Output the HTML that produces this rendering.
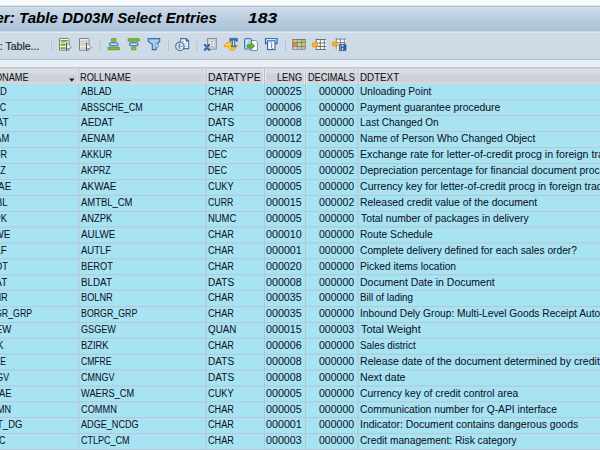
<!DOCTYPE html><html><head><meta charset="utf-8"><style>
*{margin:0;padding:0;box-sizing:border-box}
html,body{width:600px;height:450px;overflow:hidden;background:#f6f8fa}
body{position:relative;font-family:"Liberation Sans",sans-serif}
.a{position:absolute}
.t{position:absolute;white-space:nowrap;font-size:10px;line-height:12px;color:#10131c;transform-origin:0 0;-webkit-text-stroke:0.05px #10131c}
</style></head><body><div class="a" style="left:0;top:0px;width:600px;height:5px;background:#f9fafc"></div>
<div class="a" style="left:0;top:5px;width:600px;height:1px;background:#dfe5ec"></div>
<div class="a" style="left:0;top:6px;width:600px;height:1px;background:#b3c0cd"></div>
<div class="a" style="left:0;top:7px;width:600px;height:1px;background:#d3e0ec"></div>
<div class="a" style="left:0;top:8px;width:600px;height:23px;background:linear-gradient(#cbdae8,#a9c0d6)"></div>
<div class="a" style="left:0;top:31px;width:600px;height:1px;background:#c6d6e3"></div>
<div class="a" style="left:0;top:32px;width:600px;height:1px;background:#dfe8f0"></div>
<div class="a" style="left:0;top:33px;width:600px;height:26px;background:#cedae5"></div>
<div class="a" style="left:0;top:58px;width:600px;height:1px;background:#c8d4df"></div>
<div class="a" style="left:0;top:59px;width:600px;height:1px;background:#b5c3d1"></div>
<div class="a" style="left:0;top:60px;width:600px;height:7px;background:#e7eef6"></div>
<div class="a" style="left:0;top:67px;width:600px;height:1px;background:#bec8d2"></div>
<div class="a" style="left:0;top:68px;width:600px;height:1px;background:#ccd2d8"></div>
<div class="a" style="left:0;top:69px;width:600px;height:15px;background:linear-gradient(#d9dce0 0%,#d8dbdf 25%,#cdd1d8 45%,#cdd1d8 80%,#d7dade 100%)"></div>
<div class="t" style="left:-13.5px;top:9px;font-size:14px;line-height:18px;font-weight:bold;font-style:italic;color:#000;transform-origin:0 0;transform:scaleX(1.08)">ser:</div>
<div class="t" style="left:19px;top:9px;font-size:14px;line-height:18px;font-weight:bold;font-style:italic;color:#000;transform-origin:0 0;transform:scaleX(1.076)">Table DD03M Select Entries</div>
<div class="t" style="left:247.5px;top:9px;font-size:14px;line-height:18px;font-weight:bold;font-style:italic;color:#000;transform-origin:0 0;transform:scaleX(1.245)">183</div>
<div class="t" style="left:-0.2px;top:38.6px;font-size:10.5px;line-height:14px;color:#22262e;-webkit-text-stroke:0.2px #22262e">: Table...</div>
<div class="a" style="left:0;top:84px;width:600px;height:366px;background:#a7e3f3"></div>
<div class="a" style="left:0px;top:99px;width:600px;height:1px;background:#b6c6d2;opacity:0.80"></div>
<div class="a" style="left:0px;top:100px;width:600px;height:1px;background:#b6c6d2;opacity:0.20"></div>
<div class="a" style="left:0px;top:115px;width:600px;height:1px;background:#b6c6d2;opacity:0.90"></div>
<div class="a" style="left:0px;top:116px;width:600px;height:1px;background:#b6c6d2;opacity:0.10"></div>
<div class="a" style="left:0px;top:131px;width:600px;height:1px;background:#b6c6d2;opacity:0.90"></div>
<div class="a" style="left:0px;top:132px;width:600px;height:1px;background:#b6c6d2;opacity:0.10"></div>
<div class="a" style="left:0px;top:147px;width:600px;height:1px;background:#b6c6d2;opacity:0.90"></div>
<div class="a" style="left:0px;top:148px;width:600px;height:1px;background:#b6c6d2;opacity:0.10"></div>
<div class="a" style="left:0px;top:163px;width:600px;height:1px;background:#b6c6d2;opacity:0.90"></div>
<div class="a" style="left:0px;top:164px;width:600px;height:1px;background:#b6c6d2;opacity:0.10"></div>
<div class="a" style="left:0px;top:179px;width:600px;height:1px;background:#b6c6d2;opacity:0.90"></div>
<div class="a" style="left:0px;top:180px;width:600px;height:1px;background:#b6c6d2;opacity:0.10"></div>
<div class="a" style="left:0px;top:194px;width:600px;height:1px;background:#b6c6d2;opacity:0.10"></div>
<div class="a" style="left:0px;top:195px;width:600px;height:1px;background:#b6c6d2;opacity:0.90"></div>
<div class="a" style="left:0px;top:210px;width:600px;height:1px;background:#b6c6d2;opacity:0.10"></div>
<div class="a" style="left:0px;top:211px;width:600px;height:1px;background:#b6c6d2;opacity:0.90"></div>
<div class="a" style="left:0px;top:226px;width:600px;height:1px;background:#b6c6d2;opacity:0.50"></div>
<div class="a" style="left:0px;top:227px;width:600px;height:1px;background:#b6c6d2;opacity:0.50"></div>
<div class="a" style="left:0px;top:242px;width:600px;height:1px;background:#b6c6d2;opacity:0.50"></div>
<div class="a" style="left:0px;top:243px;width:600px;height:1px;background:#b6c6d2;opacity:0.50"></div>
<div class="a" style="left:0px;top:258px;width:600px;height:1px;background:#b6c6d2;opacity:0.70"></div>
<div class="a" style="left:0px;top:259px;width:600px;height:1px;background:#b6c6d2;opacity:0.30"></div>
<div class="a" style="left:0px;top:274px;width:600px;height:1px;background:#b6c6d2;opacity:0.80"></div>
<div class="a" style="left:0px;top:275px;width:600px;height:1px;background:#b6c6d2;opacity:0.20"></div>
<div class="a" style="left:0px;top:289px;width:600px;height:1px;background:#b6c6d2;opacity:0.20"></div>
<div class="a" style="left:0px;top:290px;width:600px;height:1px;background:#b6c6d2;opacity:0.80"></div>
<div class="a" style="left:0px;top:306px;width:600px;height:1px;background:#b6c6d2;opacity:1.00"></div>
<div class="a" style="left:0px;top:322px;width:600px;height:1px;background:#b6c6d2;opacity:1.00"></div>
<div class="a" style="left:0px;top:337px;width:600px;height:1px;background:#b6c6d2;opacity:0.20"></div>
<div class="a" style="left:0px;top:338px;width:600px;height:1px;background:#b6c6d2;opacity:0.80"></div>
<div class="a" style="left:0px;top:353px;width:600px;height:1px;background:#b6c6d2;opacity:0.20"></div>
<div class="a" style="left:0px;top:354px;width:600px;height:1px;background:#b6c6d2;opacity:0.80"></div>
<div class="a" style="left:0px;top:369px;width:600px;height:1px;background:#b6c6d2;opacity:0.50"></div>
<div class="a" style="left:0px;top:370px;width:600px;height:1px;background:#b6c6d2;opacity:0.50"></div>
<div class="a" style="left:0px;top:385px;width:600px;height:1px;background:#b6c6d2;opacity:0.50"></div>
<div class="a" style="left:0px;top:386px;width:600px;height:1px;background:#b6c6d2;opacity:0.50"></div>
<div class="a" style="left:0px;top:401px;width:600px;height:1px;background:#b6c6d2;opacity:0.70"></div>
<div class="a" style="left:0px;top:402px;width:600px;height:1px;background:#b6c6d2;opacity:0.30"></div>
<div class="a" style="left:0px;top:417px;width:600px;height:1px;background:#b6c6d2;opacity:1.00"></div>
<div class="a" style="left:0px;top:433px;width:600px;height:1px;background:#b6c6d2;opacity:1.00"></div>
<div class="a" style="left:0px;top:449px;width:600px;height:1px;background:#b6c6d2;opacity:1.00"></div>
<div class="a" style="left:77px;top:69px;width:1px;height:15px;background:#e6e9ed;opacity:0.70"></div>
<div class="a" style="left:78px;top:69px;width:1px;height:15px;background:#e6e9ed;opacity:0.30"></div>
<div class="a" style="left:79px;top:69px;width:1px;height:15px;background:#e6e9ed;opacity:0.70"></div>
<div class="a" style="left:80px;top:69px;width:1px;height:15px;background:#e6e9ed;opacity:0.30"></div>
<div class="a" style="left:78px;top:69px;width:1px;height:15px;background:#b9c0c8;opacity:0.70"></div>
<div class="a" style="left:79px;top:69px;width:1px;height:15px;background:#b9c0c8;opacity:0.30"></div>
<div class="a" style="left:78px;top:84px;width:1px;height:366px;background:#b6c6d2;opacity:0.70"></div>
<div class="a" style="left:79px;top:84px;width:1px;height:366px;background:#b6c6d2;opacity:0.30"></div>
<div class="a" style="left:204px;top:69px;width:1px;height:15px;background:#e6e9ed;opacity:0.50"></div>
<div class="a" style="left:205px;top:69px;width:1px;height:15px;background:#e6e9ed;opacity:0.50"></div>
<div class="a" style="left:206px;top:69px;width:1px;height:15px;background:#e6e9ed;opacity:0.50"></div>
<div class="a" style="left:207px;top:69px;width:1px;height:15px;background:#e6e9ed;opacity:0.50"></div>
<div class="a" style="left:205px;top:69px;width:1px;height:15px;background:#b9c0c8;opacity:0.50"></div>
<div class="a" style="left:206px;top:69px;width:1px;height:15px;background:#b9c0c8;opacity:0.50"></div>
<div class="a" style="left:205px;top:84px;width:1px;height:366px;background:#b6c6d2;opacity:0.50"></div>
<div class="a" style="left:206px;top:84px;width:1px;height:366px;background:#b6c6d2;opacity:0.50"></div>
<div class="a" style="left:263px;top:69px;width:1px;height:15px;background:#e6e9ed;opacity:1.00"></div>
<div class="a" style="left:265px;top:69px;width:1px;height:15px;background:#e6e9ed;opacity:1.00"></div>
<div class="a" style="left:264px;top:69px;width:1px;height:15px;background:#b9c0c8;opacity:1.00"></div>
<div class="a" style="left:264px;top:84px;width:1px;height:366px;background:#b6c6d2;opacity:1.00"></div>
<div class="a" style="left:304px;top:69px;width:1px;height:15px;background:#e6e9ed;opacity:1.00"></div>
<div class="a" style="left:306px;top:69px;width:1px;height:15px;background:#e6e9ed;opacity:1.00"></div>
<div class="a" style="left:305px;top:69px;width:1px;height:15px;background:#b9c0c8;opacity:1.00"></div>
<div class="a" style="left:305px;top:84px;width:1px;height:366px;background:#b6c6d2;opacity:1.00"></div>
<div class="a" style="left:356px;top:69px;width:1px;height:15px;background:#e6e9ed;opacity:0.50"></div>
<div class="a" style="left:357px;top:69px;width:1px;height:15px;background:#e6e9ed;opacity:0.50"></div>
<div class="a" style="left:358px;top:69px;width:1px;height:15px;background:#e6e9ed;opacity:0.50"></div>
<div class="a" style="left:359px;top:69px;width:1px;height:15px;background:#e6e9ed;opacity:0.50"></div>
<div class="a" style="left:357px;top:69px;width:1px;height:15px;background:#b9c0c8;opacity:0.50"></div>
<div class="a" style="left:358px;top:69px;width:1px;height:15px;background:#b9c0c8;opacity:0.50"></div>
<div class="a" style="left:357px;top:84px;width:1px;height:366px;background:#b6c6d2;opacity:0.50"></div>
<div class="a" style="left:358px;top:84px;width:1px;height:366px;background:#b6c6d2;opacity:0.50"></div>
<div class="t" style="left:-23.82px;top:71.60px;transform:scaleX(0.9200)">FIELDNAME</div>
<div class="t" style="left:80.47px;top:71.60px;transform:scaleX(0.9242);">ROLLNAME</div>
<div class="t" style="left:207.72px;top:71.60px;transform:scaleX(1.0430);">DATATYPE</div>
<div class="t" style="left:277.44px;top:71.60px;transform:scaleX(0.9205);">LENG</div>
<div class="t" style="left:307.84px;top:71.60px;transform:scaleX(0.9149);">DECIMALS</div>
<div class="t" style="left:359.88px;top:71.60px;transform:scaleX(0.9780);">DDTEXT</div>
<svg class="a" style="left:68px;top:77px" width="8" height="7" viewBox="0 0 8 7"><path d="M1.2 1.4 H6.4 L3.8 4.8 Z" fill="#15171c"/></svg>
<div class="t" style="left:-23.84px;top:85.50px;transform:scaleX(0.9425);">ABLAD</div>
<div class="t" style="left:81.26px;top:85.50px;transform:scaleX(0.9331);">ABLAD</div>
<div class="t" style="left:207.62px;top:85.50px;transform:scaleX(0.9144);">CHAR</div>
<div class="t" style="left:266.38px;top:85.50px;transform:scaleX(1.0702);">000025</div>
<div class="t" style="left:319.09px;top:85.50px;transform:scaleX(1.0544);">000000</div>
<div class="t" style="left:359.97px;top:85.50px;transform:scaleX(1.0103);">Unloading Point</div>
<div class="t" style="left:-23.83px;top:101.50px;transform:scaleX(0.8917);">ABSSC</div>
<div class="t" style="left:81.27px;top:101.50px;transform:scaleX(0.8955);">ABSSCHE_CM</div>
<div class="t" style="left:207.62px;top:101.50px;transform:scaleX(0.9144);">CHAR</div>
<div class="t" style="left:266.38px;top:101.50px;transform:scaleX(1.0702);">000006</div>
<div class="t" style="left:319.09px;top:101.50px;transform:scaleX(1.0544);">000000</div>
<div class="t" style="left:360.07px;top:101.50px;transform:scaleX(1.0387);">Payment guarantee procedure</div>
<div class="t" style="left:-23.86px;top:117.40px;transform:scaleX(1.0006);">AEDAT</div>
<div class="t" style="left:81.24px;top:117.40px;transform:scaleX(0.9975);">AEDAT</div>
<div class="t" style="left:208.16px;top:117.40px;transform:scaleX(1.0065);">DATS</div>
<div class="t" style="left:266.38px;top:117.40px;transform:scaleX(1.0699);">000008</div>
<div class="t" style="left:319.09px;top:117.40px;transform:scaleX(1.0544);">000000</div>
<div class="t" style="left:360.06px;top:117.40px;transform:scaleX(1.0031);">Last Changed On</div>
<div class="t" style="left:-23.84px;top:133.40px;transform:scaleX(0.9386);">AENAM</div>
<div class="t" style="left:81.26px;top:133.40px;transform:scaleX(0.9415);">AENAM</div>
<div class="t" style="left:207.62px;top:133.40px;transform:scaleX(0.9144);">CHAR</div>
<div class="t" style="left:266.38px;top:133.40px;transform:scaleX(1.0730);">000012</div>
<div class="t" style="left:319.09px;top:133.40px;transform:scaleX(1.0544);">000000</div>
<div class="t" style="left:360.03px;top:133.40px;transform:scaleX(1.0274);">Name of Person Who Changed Object</div>
<div class="t" style="left:-23.83px;top:149.40px;transform:scaleX(0.9034);">AKKUR</div>
<div class="t" style="left:81.27px;top:149.40px;transform:scaleX(0.9034);">AKKUR</div>
<div class="t" style="left:208.26px;top:149.40px;transform:scaleX(0.8953);">DEC</div>
<div class="t" style="left:266.39px;top:149.40px;transform:scaleX(1.0684);">000009</div>
<div class="t" style="left:319.09px;top:149.40px;transform:scaleX(1.0547);">000005</div>
<div class="t" style="left:360.04px;top:149.40px;transform:scaleX(1.0624)">Exchange rate for letter-of-credit procg in foreign trade</div>
<div class="t" style="left:-23.83px;top:165.40px;transform:scaleX(0.8932);">AKPRZ</div>
<div class="t" style="left:81.27px;top:165.40px;transform:scaleX(0.8932);">AKPRZ</div>
<div class="t" style="left:208.26px;top:165.40px;transform:scaleX(0.8953);">DEC</div>
<div class="t" style="left:266.38px;top:165.40px;transform:scaleX(1.0702);">000005</div>
<div class="t" style="left:319.09px;top:165.40px;transform:scaleX(1.0574);">000002</div>
<div class="t" style="left:360.03px;top:165.40px;transform:scaleX(1.0340)">Depreciation percentage for financial document processing</div>
<div class="t" style="left:-23.85px;top:181.40px;transform:scaleX(0.9865);">AKWAE</div>
<div class="t" style="left:81.25px;top:181.40px;transform:scaleX(0.9894);">AKWAE</div>
<div class="t" style="left:207.62px;top:181.40px;transform:scaleX(0.9179);">CUKY</div>
<div class="t" style="left:266.38px;top:181.40px;transform:scaleX(1.0702);">000005</div>
<div class="t" style="left:319.09px;top:181.40px;transform:scaleX(1.0544);">000000</div>
<div class="t" style="left:360.22px;top:181.40px;transform:scaleX(1.0572)">Currency key for letter-of-credit procg in foreign trade</div>
<div class="t" style="left:-23.84px;top:197.20px;transform:scaleX(0.9483);">AMTBL</div>
<div class="t" style="left:81.26px;top:197.20px;transform:scaleX(0.9418);">AMTBL_CM</div>
<div class="t" style="left:207.65px;top:197.20px;transform:scaleX(0.8743);">CURR</div>
<div class="t" style="left:266.38px;top:197.20px;transform:scaleX(1.0702);">000015</div>
<div class="t" style="left:319.09px;top:197.20px;transform:scaleX(1.0574);">000002</div>
<div class="t" style="left:360.07px;top:197.20px;transform:scaleX(1.0386);">Released credit value of the document</div>
<div class="t" style="left:-23.84px;top:213.20px;transform:scaleX(0.9270);">ANZPK</div>
<div class="t" style="left:81.26px;top:213.20px;transform:scaleX(0.9361);">ANZPK</div>
<div class="t" style="left:208.21px;top:213.20px;transform:scaleX(0.9404);">NUMC</div>
<div class="t" style="left:266.38px;top:213.20px;transform:scaleX(1.0702);">000005</div>
<div class="t" style="left:319.09px;top:213.20px;transform:scaleX(1.0544);">000000</div>
<div class="t" style="left:360.56px;top:213.20px;transform:scaleX(1.0326);">Total number of packages in delivery</div>
<div class="t" style="left:-23.85px;top:228.80px;transform:scaleX(0.9855);">AULWE</div>
<div class="t" style="left:81.25px;top:228.80px;transform:scaleX(0.9825);">AULWE</div>
<div class="t" style="left:207.62px;top:228.80px;transform:scaleX(0.9144);">CHAR</div>
<div class="t" style="left:266.38px;top:228.80px;transform:scaleX(1.0699);">000010</div>
<div class="t" style="left:319.09px;top:228.80px;transform:scaleX(1.0544);">000000</div>
<div class="t" style="left:360.08px;top:228.80px;transform:scaleX(1.0212);">Route Schedule</div>
<div class="t" style="left:-23.85px;top:244.80px;transform:scaleX(0.9714);">AUTLF</div>
<div class="t" style="left:81.26px;top:244.80px;transform:scaleX(0.9519);">AUTLF</div>
<div class="t" style="left:207.62px;top:244.80px;transform:scaleX(0.9144);">CHAR</div>
<div class="t" style="left:266.38px;top:244.80px;transform:scaleX(1.0728);">000001</div>
<div class="t" style="left:319.09px;top:244.80px;transform:scaleX(1.0544);">000000</div>
<div class="t" style="left:360.25px;top:244.80px;transform:scaleX(1.0216);">Complete delivery defined for each sales order?</div>
<div class="t" style="left:-24.44px;top:260.60px;transform:scaleX(0.9296);">BEROT</div>
<div class="t" style="left:80.67px;top:260.60px;transform:scaleX(0.9265);">BEROT</div>
<div class="t" style="left:207.62px;top:260.60px;transform:scaleX(0.9144);">CHAR</div>
<div class="t" style="left:266.38px;top:260.60px;transform:scaleX(1.0699);">000020</div>
<div class="t" style="left:319.09px;top:260.60px;transform:scaleX(1.0544);">000000</div>
<div class="t" style="left:360.08px;top:260.60px;transform:scaleX(1.0223);">Picked items location</div>
<div class="t" style="left:-24.49px;top:276.50px;transform:scaleX(0.9921);">BLDAT</div>
<div class="t" style="left:80.62px;top:276.50px;transform:scaleX(0.9822);">BLDAT</div>
<div class="t" style="left:208.16px;top:276.50px;transform:scaleX(1.0065);">DATS</div>
<div class="t" style="left:266.38px;top:276.50px;transform:scaleX(1.0699);">000008</div>
<div class="t" style="left:319.09px;top:276.50px;transform:scaleX(1.0544);">000000</div>
<div class="t" style="left:360.02px;top:276.50px;transform:scaleX(1.0486);">Document Date in Document</div>
<div class="t" style="left:-24.43px;top:292.10px;transform:scaleX(0.9210);">BOLNR</div>
<div class="t" style="left:80.67px;top:292.10px;transform:scaleX(0.9210);">BOLNR</div>
<div class="t" style="left:207.62px;top:292.10px;transform:scaleX(0.9144);">CHAR</div>
<div class="t" style="left:266.38px;top:292.10px;transform:scaleX(1.0702);">000035</div>
<div class="t" style="left:319.09px;top:292.10px;transform:scaleX(1.0544);">000000</div>
<div class="t" style="left:360.12px;top:292.10px;transform:scaleX(0.9833);">Bill of lading</div>
<div class="t" style="left:-24.39px;top:308.30px;transform:scaleX(0.8777);">BORGR_GRP</div>
<div class="t" style="left:80.71px;top:308.30px;transform:scaleX(0.8809);">BORGR_GRP</div>
<div class="t" style="left:207.62px;top:308.30px;transform:scaleX(0.9144);">CHAR</div>
<div class="t" style="left:266.38px;top:308.30px;transform:scaleX(1.0702);">000035</div>
<div class="t" style="left:319.09px;top:308.30px;transform:scaleX(1.0544);">000000</div>
<div class="t" style="left:359.85px;top:308.30px;transform:scaleX(1.0215)">Inbound Dely Group: Multi-Level Goods Receipt Automation</div>
<div class="t" style="left:-24.46px;top:324.30px;transform:scaleX(0.9602);">BTGEW</div>
<div class="t" style="left:80.83px;top:324.30px;transform:scaleX(0.9122);">GSGEW</div>
<div class="t" style="left:207.69px;top:324.30px;transform:scaleX(0.9807);">QUAN</div>
<div class="t" style="left:266.38px;top:324.30px;transform:scaleX(1.0702);">000015</div>
<div class="t" style="left:319.09px;top:324.30px;transform:scaleX(1.0544);">000003</div>
<div class="t" style="left:360.53px;top:324.30px;transform:scaleX(1.0881);">Total Weight</div>
<div class="t" style="left:-24.44px;top:340.10px;transform:scaleX(0.9378);">BZIRK</div>
<div class="t" style="left:80.66px;top:340.10px;transform:scaleX(0.9342);">BZIRK</div>
<div class="t" style="left:207.62px;top:340.10px;transform:scaleX(0.9144);">CHAR</div>
<div class="t" style="left:266.38px;top:340.10px;transform:scaleX(1.0702);">000006</div>
<div class="t" style="left:319.09px;top:340.10px;transform:scaleX(1.0544);">000000</div>
<div class="t" style="left:360.08px;top:340.10px;transform:scaleX(0.9817);">Sales district</div>
<div class="t" style="left:-24.22px;top:356.10px;transform:scaleX(0.8429);">CMFRE</div>
<div class="t" style="left:80.87px;top:356.10px;transform:scaleX(0.8575);">CMFRE</div>
<div class="t" style="left:208.16px;top:356.10px;transform:scaleX(1.0065);">DATS</div>
<div class="t" style="left:266.38px;top:356.10px;transform:scaleX(1.0699);">000008</div>
<div class="t" style="left:319.09px;top:356.10px;transform:scaleX(1.0544);">000000</div>
<div class="t" style="left:360.05px;top:356.10px;transform:scaleX(1.0574)">Release date of the document determined by credit management</div>
<div class="t" style="left:-24.26px;top:371.80px;transform:scaleX(0.8884);">CMNGV</div>
<div class="t" style="left:80.84px;top:371.80px;transform:scaleX(0.8995);">CMNGV</div>
<div class="t" style="left:208.16px;top:371.80px;transform:scaleX(1.0065);">DATS</div>
<div class="t" style="left:266.38px;top:371.80px;transform:scaleX(1.0699);">000008</div>
<div class="t" style="left:319.09px;top:371.80px;transform:scaleX(1.0544);">000000</div>
<div class="t" style="left:360.00px;top:371.80px;transform:scaleX(1.0631);">Next date</div>
<div class="t" style="left:-24.29px;top:387.80px;transform:scaleX(0.9368);">CMWAE</div>
<div class="t" style="left:81.29px;top:387.80px;transform:scaleX(0.9267);">WAERS_CM</div>
<div class="t" style="left:207.62px;top:387.80px;transform:scaleX(0.9179);">CUKY</div>
<div class="t" style="left:266.38px;top:387.80px;transform:scaleX(1.0702);">000005</div>
<div class="t" style="left:319.09px;top:387.80px;transform:scaleX(1.0544);">000000</div>
<div class="t" style="left:360.24px;top:387.80px;transform:scaleX(1.0351);">Currency key of credit control area</div>
<div class="t" style="left:-24.27px;top:403.60px;transform:scaleX(0.9034);">COMMN</div>
<div class="t" style="left:80.82px;top:403.60px;transform:scaleX(0.9221);">COMMN</div>
<div class="t" style="left:207.62px;top:403.60px;transform:scaleX(0.9144);">CHAR</div>
<div class="t" style="left:266.38px;top:403.60px;transform:scaleX(1.0702);">000005</div>
<div class="t" style="left:319.09px;top:403.60px;transform:scaleX(1.0544);">000000</div>
<div class="t" style="left:360.24px;top:403.60px;transform:scaleX(1.0268);">Communication number for Q-API interface</div>
<div class="t" style="left:-24.30px;top:419.30px;transform:scaleX(0.9485);">CONT_DG</div>
<div class="t" style="left:81.27px;top:419.30px;transform:scaleX(0.9098);">ADGE_NCDG</div>
<div class="t" style="left:207.62px;top:419.30px;transform:scaleX(0.9144);">CHAR</div>
<div class="t" style="left:266.38px;top:419.30px;transform:scaleX(1.0728);">000001</div>
<div class="t" style="left:319.09px;top:419.30px;transform:scaleX(1.0544);">000000</div>
<div class="t" style="left:359.82px;top:419.30px;transform:scaleX(1.0408);">Indicator: Document contains dangerous goods</div>
<div class="t" style="left:-24.27px;top:435.30px;transform:scaleX(0.9040);">CTLPC</div>
<div class="t" style="left:80.83px;top:435.30px;transform:scaleX(0.9024);">CTLPC_CM</div>
<div class="t" style="left:207.62px;top:435.30px;transform:scaleX(0.9144);">CHAR</div>
<div class="t" style="left:266.38px;top:435.30px;transform:scaleX(1.0699);">000003</div>
<div class="t" style="left:319.09px;top:435.30px;transform:scaleX(1.0544);">000000</div>
<div class="t" style="left:360.25px;top:435.30px;transform:scaleX(1.0173);">Credit management: Risk category</div><svg class="a" style="left:0;top:0" width="600" height="60" viewBox="0 0 600 60" shape-rendering="geometricPrecision">
<!-- separators -->
<g fill="#afc5dc"><rect x="51" y="40" width="1" height="11"/><rect x="168" y="40" width="1" height="11"/><rect x="285" y="40" width="1" height="11"/><rect x="99" y="40" width="1" height="11" opacity="0.55"/><rect x="100" y="40" width="1" height="11" opacity="0.5"/><rect x="196" y="40" width="1" height="11" opacity="0.5"/><rect x="197" y="40" width="1" height="11" opacity="0.55"/></g>
<g fill="#e4ecf3"><rect x="50" y="42" width="1" height="1"/><rect x="50" y="44" width="1" height="1"/><rect x="50" y="46" width="1" height="1"/><rect x="50" y="48" width="1" height="1"/><rect x="167" y="42" width="1" height="1"/><rect x="167" y="46" width="1" height="1"/><rect x="284" y="42" width="1" height="1"/><rect x="284" y="46" width="1" height="1"/></g>
<!-- icon1 select all -->
<g transform="translate(56,36)">
<path d="M3.5 2.5 H12.2 L13 3.3 V14.1 H3.5 Z" fill="#fbfbfb" stroke="#7b8083" stroke-width="1"/>
<rect x="4.6" y="4" width="7.2" height="1.7" fill="#62ad1c"/>
<rect x="4.6" y="6" width="4.8" height="1.7" fill="#a9d18c"/>
<rect x="4.6" y="8" width="5" height="1.8" fill="#62ad1c"/>
<rect x="4.6" y="11.2" width="5" height="1.7" fill="#62ad1c"/>
<path d="M10.6 6.8 L15.6 11.7 L10.6 13 Z" fill="#fafafa" stroke="#858a8d" stroke-width="0.9"/>
<rect x="10" y="6.8" width="1" height="7.8" fill="#4a4e58"/>
</g>
<!-- icon2 deselect all -->
<g transform="translate(76,36)">
<path d="M3.5 2.5 H12.2 L13 3.3 V14.1 H3.5 Z" fill="#f8f8f6" stroke="#7f8385" stroke-width="1"/>
<rect x="4.9" y="4.1" width="6.8" height="1.5" fill="#f2f2ee" stroke="#b4b4ac" stroke-width="0.6"/>
<rect x="4.9" y="6.1" width="4.4" height="1.5" fill="#f2f2ee" stroke="#b4b4ac" stroke-width="0.6"/>
<rect x="4.9" y="8.1" width="4.6" height="1.6" fill="#f2f2ee" stroke="#b4b4ac" stroke-width="0.6"/>
<rect x="4.9" y="11.3" width="4.6" height="1.5" fill="#f2f2ee" stroke="#b4b4ac" stroke-width="0.6"/>
<path d="M10.6 6.8 L15.6 11.7 L10.6 13 Z" fill="#fafafa" stroke="#858a8d" stroke-width="0.9"/>
<rect x="10" y="6.8" width="1" height="7.8" fill="#4a4e58"/>
</g>
<!-- sort asc -->
<g transform="translate(104,36)">
<rect x="7.5" y="2.7" width="4.4" height="2.6" rx="0.4" fill="#86c93c" stroke="#5a9630" stroke-width="0.9"/>
<rect x="5.6" y="6.9" width="8.2" height="2.8" rx="1.1" fill="#dbe8f4" stroke="#3a79bb" stroke-width="1.2"/>
<rect x="4.1" y="11.2" width="11.2" height="2.5" rx="0.4" fill="#7cc234" stroke="#5a9630" stroke-width="0.9"/>
</g>
<!-- sort desc -->
<g transform="translate(124,36)">
<rect x="4.1" y="2.7" width="11.2" height="2.5" rx="0.4" fill="#7cc234" stroke="#5a9630" stroke-width="0.9"/>
<rect x="5.6" y="6.9" width="8.2" height="2.8" rx="1.1" fill="#dbe8f4" stroke="#3a79bb" stroke-width="1.2"/>
<rect x="7.5" y="11.2" width="4.4" height="2.6" rx="0.4" fill="#86c93c" stroke="#5a9630" stroke-width="0.9"/>
</g>
<!-- filter -->
<g transform="translate(144,36)">
<path d="M4.2 2.6 H15.7 V5.4 L12.2 8.2 V13.6 H8.3 V8.2 L4.2 5.4 Z" fill="#a6cdea" stroke="#2f6fb0" stroke-width="1.1"/>
<path d="M12.2 7.4 Q15.2 7.8 14.4 10.6 Q13.6 11.6 12.2 11.4" fill="#e8f2fa" stroke="#3573b2" stroke-width="0.9"/>
</g>
<!-- details -->
<g transform="translate(173,36)">
<path d="M7.6 2.6 H13.2 L15.6 5 V12.6 H7.6 Z" fill="#f4f8fc" stroke="#3a79b6" stroke-width="1.1"/>
<path d="M12.8 2.4 L15.8 5.4 H12.8 Z" fill="#23558f"/>
<rect x="9.6" y="4.8" width="1.4" height="1" fill="#6aa6d8"/><rect x="12.2" y="7.2" width="1.2" height="1.2" fill="#5a9ad0"/><rect x="12.6" y="10" width="1.2" height="1" fill="#5a9ad0"/>
<circle cx="6.9" cy="10.4" r="4.2" fill="#dfe9f1" stroke="#6f7376" stroke-width="1.3"/>
<rect x="5.5" y="7.6" width="1.7" height="5.2" fill="#4f93cc"/>
<rect x="7.4" y="9.8" width="3" height="1.2" fill="#6fb0dd"/>
</g>
<!-- excel -->
<g transform="translate(201,36)">
<rect x="6.5" y="2.5" width="8.8" height="10.6" fill="#e2e2e0" stroke="#8b8d8e" stroke-width="1"/>
<rect x="8" y="4" width="5.8" height="7.6" fill="#fdfdfd" stroke="#9a9c9c" stroke-width="0.6"/>
<rect x="9.6" y="5.2" width="2.6" height="1" fill="#8a8c8c"/><rect x="9.6" y="7.4" width="2.6" height="1" fill="#8a8c8c"/><rect x="9.6" y="9.6" width="2.6" height="1" fill="#8a8c8c"/>
<path d="M3.9 8.9 L8.1 13.9 M8.1 8.9 L3.9 13.9" stroke="#2663ae" stroke-width="2.2" stroke-linecap="round"/><path d="M4.8 9.8 L7.2 12.9" stroke="#6aa8dc" stroke-width="0.6"/>
</g>
<!-- orange T -->
<g transform="translate(222,36)">
<path d="M1.8 10.4 L5.6 6.2 H9.6 V9.2 L15.4 9.4 L12 14 H8.2 L6.4 10.6 Z" fill="#ffd02c" stroke="#f19a16" stroke-width="1" stroke-linejoin="round"/>
<path d="M7.8 2.3 H15.4 V5.3 H14 V4.6 H12.8 V9.6 H14 V10.8 H9.2 V9.6 H10.4 V4.6 H9.2 V5.3 H7.8 Z" fill="#3573b4" stroke="#2d62a0" stroke-width="0.6"/>
<rect x="11.1" y="4.4" width="1.1" height="5.4" fill="#cfe2f2"/>
</g>
<!-- doc transfer -->
<g transform="translate(242,36)">
<path d="M8.5 4.5 H13.6 L15.4 6.3 V14.6 H8.5 Z" fill="#fcfcfc" stroke="#8c8e90" stroke-width="1"/>
<rect x="2.5" y="2.5" width="7" height="10.6" rx="0.8" fill="#a9cdea" stroke="#3a78b6" stroke-width="1"/>
<rect x="3.8" y="4.2" width="2.6" height="0.9" fill="#fff"/><rect x="3.8" y="6" width="2" height="0.9" fill="#fff"/><rect x="3.8" y="8" width="1.6" height="0.9" fill="#fff"/>
<path d="M5.4 8.6 H9.4 V6.8 L12.8 10 L9.4 13.2 V11.4 H5.4 Z" fill="#66b526" stroke="#3f8f1e" stroke-width="0.6"/>
</g>
<!-- print preview -->
<g transform="translate(262,36)">
<rect x="3.5" y="2.7" width="11.6" height="4.8" fill="#dce8f2" stroke="#2c65aa" stroke-width="1.2"/>
<rect x="4.4" y="3.4" width="9.8" height="1" fill="#f4f8fc"/>
<rect x="4.2" y="5.2" width="1" height="1.4" fill="#c8a060"/><rect x="13.4" y="5.2" width="1" height="1.4" fill="#c8a060"/>
<rect x="5.6" y="4.8" width="7.4" height="8.8" fill="#f8fbfd" stroke="#2c65aa" stroke-width="1.1"/>
<path d="M8.4 5.6 Q10.6 7.6 9.6 10 Q8.8 11.8 10.8 13" fill="none" stroke="#4f86c2" stroke-width="1"/>
</g>
<!-- color grid -->
<g transform="translate(290,36)">
<rect x="2.4" y="3" width="13.2" height="10.6" fill="#6a6c6e"/>
<rect x="3.3" y="3.8" width="3.6" height="2.6" fill="#f6c23a"/>
<rect x="7.5" y="3.8" width="3.6" height="2.6" fill="#a4c8e6"/>
<rect x="11.7" y="3.8" width="3.2" height="2.6" fill="#9ccf6c"/>
<rect x="3.3" y="7.2" width="3.6" height="2.6" fill="#f29222"/>
<rect x="7.5" y="7.2" width="3.6" height="2.6" fill="#dccfa2"/>
<rect x="11.7" y="7.2" width="3.2" height="2.6" fill="#ffcf1e"/>
<rect x="3.3" y="10.6" width="3.6" height="2.4" fill="#efbccb"/>
<rect x="7.5" y="10.6" width="3.6" height="2.4" fill="#a9d6a0"/>
<rect x="11.7" y="10.6" width="3.2" height="2.4" fill="#a4c8e6"/>
</g>
<!-- grid + orange -->
<g transform="translate(310,36)">
<rect x="6.2" y="3.2" width="9.6" height="10.4" fill="#ffffff"/>
<g fill="#5d6466">
<rect x="5.8" y="3.0" width="0.9" height="10.9"/><rect x="9.8" y="3.0" width="0.9" height="10.9"/><rect x="13.8" y="3.0" width="0.9" height="10.9"/>
<rect x="5.8" y="3.0" width="10" height="0.9"/><rect x="5.8" y="6.6" width="10" height="0.8"/><rect x="5.8" y="10.1" width="10" height="0.9"/><rect x="5.8" y="13.1" width="10" height="0.9"/>
</g>
<rect x="2.3" y="6.9" width="5.4" height="3.8" rx="1" fill="#fbb827" stroke="#ef8f12" stroke-width="0.9"/>
</g>
<!-- grid + orange + disk -->
<g transform="translate(330,36)">
<rect x="6.2" y="2.8" width="9.6" height="10.8" fill="#ffffff"/>
<g fill="#6f7577">
<rect x="5.8" y="2.6" width="0.9" height="11"/><rect x="9.8" y="2.6" width="0.9" height="11"/><rect x="13.8" y="2.6" width="0.9" height="6"/>
<rect x="5.8" y="2.6" width="10" height="0.9"/><rect x="5.8" y="6.0" width="10" height="0.8"/>
</g>
<rect x="2.5" y="6.2" width="5.4" height="3.6" rx="0.8" fill="#fbb524" stroke="#ef8c10" stroke-width="0.9"/>
<rect x="9.2" y="8.2" width="6.8" height="6.4" rx="0.5" fill="#2a5f9f" stroke="#234f86" stroke-width="0.6"/>
<rect x="11.8" y="8.9" width="1.5" height="1.7" fill="#e8f0f8"/><rect x="11.8" y="12.2" width="1.5" height="1.5" fill="#e8f0f8"/>
<rect x="9.9" y="9" width="0.8" height="5" fill="#6fb4d8"/>
</g>
</svg>
</body></html>
